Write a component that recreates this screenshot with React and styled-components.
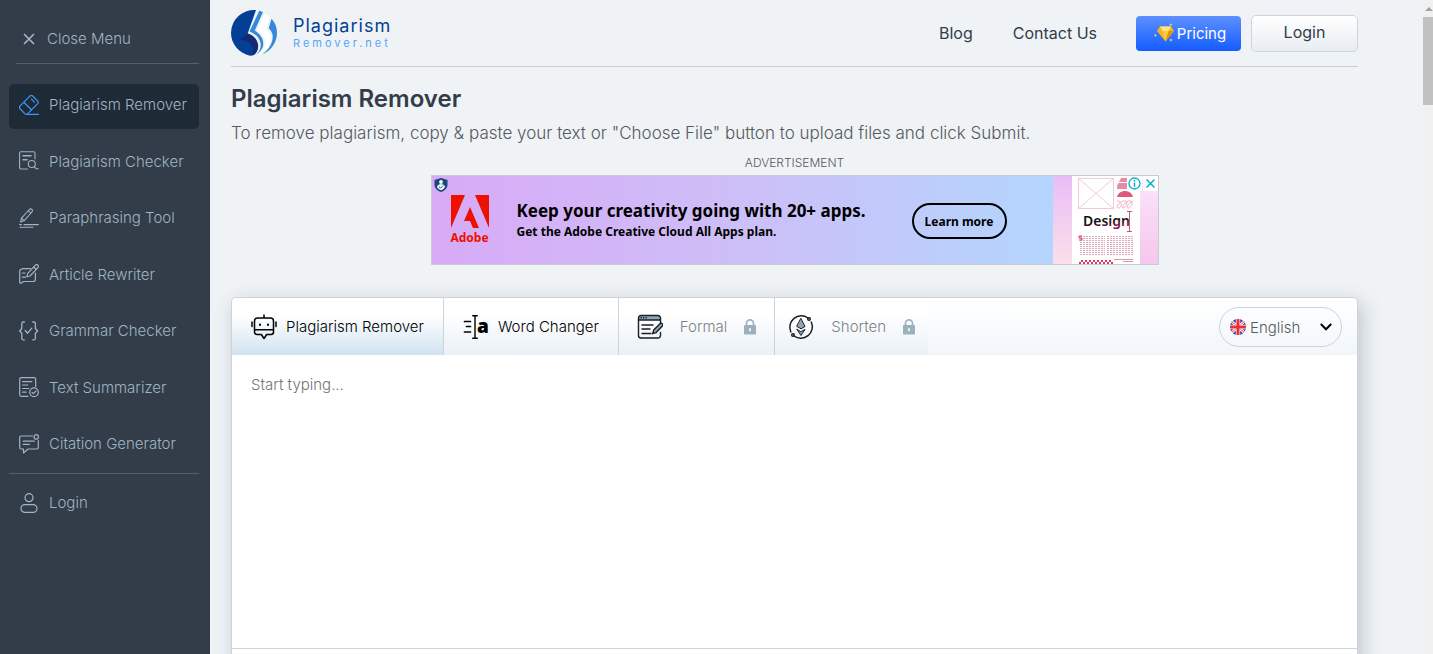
import React, { useState } from "react";
import styled, { createGlobalStyle, css } from "styled-components";

const GlobalStyle = createGlobalStyle`
  * {
    box-sizing: border-box;
  }

  body {
    margin: 0;
    background: #eff3f6;
    color: #323d49;
    font-family: "Inter", "Liberation Sans", sans-serif;
    font-size: 15px;
  }

  button, select, textarea {
    font-family: inherit;
  }
`;

const line = {
  fill: "none",
  stroke: "currentColor",
  strokeLinecap: "round",
  strokeLinejoin: "round",
};

/* Icons */
const CloseIcon = () => (
  <svg width="20" height="20" viewBox="0 0 20 20" {...line} strokeWidth="1.7">
    <path d="M5.5 5.5l9 9M14.5 5.5l-9 9" />
  </svg>
);

const EraserIcon = () => (
  <svg width="20" height="20" viewBox="0 0 20 20" {...line} stroke="#3f94f8" strokeWidth="1.2">
    <path d="M1.2 10.8 10.800 1.200a2.200 2.200 0 0 1 3.100 0l4.600 4.600a2.200 2.200 0 0 1 0 3.100L8.800 18.600a2.200 2.200 0 0 1-3 0l-4.600-4.600a2.200 2.200 0 0 1 0-3.200z" />
    <path d="M5 7.500l7.500 7.300M7.500 19.300h12M12.400 4.200l3 3" />
  </svg>
);

const CheckerIcon = () => (
  <svg width="20" height="20" viewBox="0 0 20 20" {...line} strokeWidth="1.1">
    <path d="M8.500 18H2a1.400 1.400 0 0 1-1.400-1.400V2.200A1.400 1.400 0 0 1 2 .8h12.600A1.400 1.400 0 0 1 16 2.200v5.600" />
    <path d="M4 4.700h8M4 8.800h4" strokeWidth="1.500" />
    <circle cx="12.800" cy="13" r="3.500" />
    <path d="M15.400 15.600l1.800 2.200h2" />
  </svg>
);

const PenLinesIcon = () => (
  <svg width="20" height="20" viewBox="0 0 20 20" {...line} strokeWidth="1.1">
    <path d="M1.600 14l.9-3.800L10.400 1.500a1.700 1.700 0 0 1 2.500 2.500L5.200 12.600z" />
    <path d="M9.300 2.700l2.500 2.400M2.500 10.200l2.700 2.400M.6 16.600h2M5 16.600h14.400M1 19.300h13" />
  </svg>
);

const RewriterIcon = () => (
  <svg width="20" height="20" viewBox="0 0 20 20" {...line} strokeWidth="1.200">
    <path d="M11.500 4.700H3.200L.7 6.200v12c0 1 1 1.300 1.800.7l2-1.400h9.700a2.200 2.200 0 0 0 2.200-2.200V9" />
    <path d="M8 12.600l.6-3L16.400 1.200a1.700 1.700 0 0 1 2.500 2.500L11 12zM3.200 9h3M3.200 13.200h3.500M14.700 3l2.500 2.500" />
  </svg>
);

const BracesIcon = () => (
  <svg width="20" height="20" viewBox="0 0 20 20" {...line} strokeWidth="1.300">
    <path d="M5.400 1H4.300A1.500 1.500 0 0 0 2.800 2.500v5L.7 10l2.100 2.300v5A1.500 1.500 0 0 0 4.300 18.800h1.100M13.800 1h1.100a1.500 1.500 0 0 1 1.500 1.500v5L18.600 10l-2.200 2.300v5a1.500 1.500 0 0 1-1.500 1.500h-1.100" />
    <path d="M6.200 9.500l2.400 2.700 4.200-5" />
  </svg>
);

const SummaryIcon = () => (
  <svg width="20" height="20" viewBox="0 0 20 20" {...line} strokeWidth="1.200">
    <path d="M9 19.300H2.200A1.500 1.500 0 0 1 .7 17.800V2A1.500 1.500 0 0 1 2.200.6h13A1.500 1.500 0 0 1 16.700 2v7.400" />
    <path d="M3.600 4.600h9.200M3.600 8h5.200M3.600 11.500h6.200M3.600 15.200h3.500" />
    <circle cx="15" cy="15.200" r="4.300" />
    <path d="M13 15.300l1.400 1.300 2.600-2.800" />
  </svg>
);

const CitationIcon = () => (
  <svg width="20" height="20" viewBox="0 0 20 20" {...line} strokeWidth="1.200">
    <path d="M13.600 2H2.200A1.500 1.500 0 0 0 .7 3.500v10A1.500 1.500 0 0 0 2.200 15h2.300v4l4.600-4h8.700a1.500 1.500 0 0 0 1.500-1.500V6.500" />
    <path d="M4.300 7.200h11M4.300 10.400h6" />
    <circle cx="17.200" cy="2.900" r="2.200" />
  </svg>
);

const UserIcon = () => (
  <svg width="20" height="20" viewBox="0 0 20 20" {...line} strokeWidth="1.200">
    <circle cx="10" cy="4.700" r="4" />
    <rect x="2" y="11.600" width="16" height="7.800" rx="3.900" />
  </svg>
);

const LogoMark = () => (
  <svg width="46" height="46" viewBox="0 0 46 46">
    <path fill="#053f95" d="M25 .1A23 23 0 0 0 0 23c0 11 8.500 20.500 19 22.700 5 .2 8-4.500 7.500-9L16.500 24z" />
    <path fill="#142a75" d="M8.500 29.500c4-1.500 5.500-4 8-6.200 5.500 1.500 10.500 6.700 10.700 12.200.2 5-2.200 8.700-6.200 10.100 3.500-7 0-15-12.500-16.100z" />
    <path fill="#3489d8" d="M28.300.8l3.700 1.200-8.200 18.500c5 3.500 8.700 7.500 8.500 13.500-.2 4.500-3 8-7.800 11.300 3.800-3.500 5.500-7 5.200-11.300-.5-5.500-5-10-11.200-12.500z" />
    <path fill="#fff" d="M33.500 3.400l4 2.600-5 13.500c5 5 6.500 10 4.500 15.500-1.500 4-4.500 7.500-8.500 9.700l-3 .6c5.500-3.700 8.300-7.300 8.600-11.800.2-5.500-3-10-7.600-13z" />
    <path fill="#fff" d="M37.500 6l1.500 1.300-3.600 11.200c4 4.500 5.100 9.500 3.600 14.500-1.300 4-4.500 8-9 11.300 4-3.500 6.500-7.500 7-11.800.5-4.500-1-9-4.500-13z" />
    <path fill="#3489d8" d="M40.500 8.800C44 12.500 46 17.300 46 23c0 10-6.700 18.300-14.500 21.300C37.500 39.500 42 33.500 41.700 26c-.2-3-1.500-5.300-4-7.700z" />
  </svg>
);

const DiamondIcon = () => (
  <svg width="20" height="20" viewBox="0 0 20 20">
    <path fill="#f6b81c" d="M6 3.500h11l3 4.500-8.500 10.500L3 8z" />
    <path fill="#ffe48b" d="M6 3.500h11L14.500 8h-6z" />
    <path fill="#fccb3d" d="M8.500 8h6l-3 10.500z" />
    <path fill="#dd9410" d="M14.500 8H20l-8.500 10.500z" />
    <path fill="#ffd95c" d="M16.800 0l.5 1.200 1.200.5-1.200.5-.5 1.200-.5-1.200-1.200-.5 1.200-.5zM1.300 10.500l.5 1.200 1 .5-1 .5-.5 1.200-.5-1.200-1-.5 1-.5zM17 15.300l.6 1.300 1.200.5-1.200.5-.6 1.300-.6-1.300-1.200-.5 1.200-.5z" />
  </svg>
);

const RobotIcon = () => (
  <svg width="26" height="26" viewBox="0 0 26 26" {...line} strokeWidth="1.500">
    <path d="M13 1v3M6.500 4h13a3 3 0 0 1 3 3v11a2.500 2.500 0 0 1-2.500 2.500h-4.300L13 24.500l-2.700-4H6A2.500 2.500 0 0 1 3.500 18V7a3 3 0 0 1 3-3zM3.500 15.700h19M1 8v4.500M25 8v4.500" />
    <path d="M9 10.500v.6M17 10.500v.6" strokeWidth="2" />
  </svg>
);

const WordIcon = () => (
  <svg width="26" height="26" viewBox="0 0 26 26" {...line}>
    <path d="M1.500 7.500h6M3.500 12.500h4M1.500 18h6" strokeWidth="1.700" />
    <path d="M12 2.200v21.600M9.700 1.800h4.600M9.700 24.200h4.600" strokeWidth="1.400" />
    <text x="14" y="18.500" fill="currentColor" stroke="none" fontFamily="Open Sans, sans-serif" fontWeight="800" fontSize="19">
      a
    </text>
  </svg>
);

const FormalIcon = () => (
  <svg width="26" height="26" viewBox="0 0 26 26" {...line} stroke="#1b1f23" strokeWidth="1.400">
    <path fill="#8ea6b6" d="M1.500 6V4A2.500 2.500 0 0 1 4 1.500h17A2.500 2.500 0 0 1 23.500 4v2z" />
    <path d="M1.500 6v15.500A2.500 2.500 0 0 0 4 24h17a2.500 2.500 0 0 0 2.500-2.500v-3M23.500 6v3.500M4 3.800h.3M6.500 3.800h.3M9 3.800h.3" />
    <path d="M5 11h11M5 15h8M5 19.500h9" />
    <path fill="#8ea6b6" d="M15.700 19.700l1-3.600 6.300-6.400a1.700 1.700 0 0 1 2.400 2.400l-6.300 6.500z" />
  </svg>
);

const ShortenIcon = () => (
  <svg width="26" height="26" viewBox="0 0 26 26" {...line} stroke="#1b1f23" strokeWidth="1.500">
    <path d="M20 4A11.500 11.500 0 0 0 2.800 18M6 22A11.500 11.500 0 0 0 23.300 8" />
    <circle cx="21" cy="5" r="1.300" />
    <circle cx="5" cy="21" r="1.300" />
    <path fill="#8ea6b6" strokeWidth="1" d="M13 4.700l4 7.800-4 2.300-4-2.300zM9 15.500l4 6 4-6-4 2z" />
  </svg>
);

const LockIcon = () => (
  <svg width="12" height="16" viewBox="0 0 12 16">
    <path fill="none" stroke="#9fb4c1" strokeWidth="1.700" d="M2.500 7V4.300a3.500 3.500 0 0 1 7 0V7" />
    <rect y="6" width="12" height="9.500" rx="1" fill="#9bb1be" />
    <path fill="#fff" d="M5.200 9.300h1.600v3H5.200z" />
  </svg>
);

const FlagIcon = () => (
  <svg width="16" height="16" viewBox="0 0 16 16">
    <clipPath id="flag-round">
      <circle cx="8" cy="8" r="8" />
    </clipPath>
    <g clipPath="url(#flag-round)">
      <path fill="#2e429b" d="M0 0h16v16H0z" />
      <path stroke="#fff" strokeWidth="2.800" d="M0 1l16 14M16 1L0 15" />
      <path stroke="#ee3a43" strokeWidth="1" d="M0 1l16 14M16 1L0 15" />
      <path stroke="#fff" strokeWidth="4.400" d="M8 0v16M0 8h16" />
      <path stroke="#f02c35" strokeWidth="3" d="M8 0v16M0 8h16" />
    </g>
  </svg>
);

const ChevronIcon = () => (
  <svg width="12" height="8" viewBox="0 0 12 8" fill="none" stroke="#000" strokeWidth="2">
    <path d="M.8 1L6 6.300 11.200 1" />
  </svg>
);

const ShieldIcon = () => (
  <svg width="14" height="14" viewBox="0 0 14 14">
    <path fill="#17497b" d="M7 0l6.500 2v4.500c0 3.500-2.500 6-6.500 7.500C3 12.500.5 10 .5 6.500V2z" />
    <circle cx="7" cy="4" r="1.900" fill="#fff" />
    <path fill="#fff" d="M3 8.500c.8-1.800 2-2.300 4-2.300s3.200.5 4 2.300c-.5 1.700-1.800 2.900-4 3.700-2.200-.8-3.500-2-4-3.700z" />
    <path fill="none" stroke="#17497b" d="M5 8.800l1.500 1.400L9.200 7.500" />
  </svg>
);

const AdobeIcon = () => (
  <svg width="38" height="33" viewBox="0 0 38 33">
    <path fill="#ee1100" d="M0 0h14L0 33zM24 0h14v33zM19 12l9 21h-6l-3-7h-6z" />
  </svg>
);

const DesignArt = () => (
  <svg width="105" height="88" viewBox="0 0 105 88">
    <defs>
      <linearGradient id="art-side" x2="0" y2="1">
        <stop offset="0" stopColor="#e8bdf7" />
        <stop offset="1" stopColor="#fbdfe9" />
      </linearGradient>
      <linearGradient id="art-side-right" x2="0" y2="1">
        <stop offset="0" stopColor="#fbe6fb" />
        <stop offset="1" stopColor="#f6c6ec" />
      </linearGradient>
      <linearGradient id="art-word" x2="0.3" y2="1">
        <stop offset="0.6" stopColor="#111" />
        <stop offset="1" stopColor="#8d1457" />
      </linearGradient>
      <pattern id="art-copy" width="3" height="2" patternUnits="userSpaceOnUse">
        <path fill="#dcaabb" d="M0 0h2v1H0z" />
      </pattern>
      <pattern id="art-zigzag" width="4" height="4" patternUnits="userSpaceOnUse">
        <path fill="#e0355c" d="M0 0h2v2H0zM2 2h2v2H2z" />
      </pattern>
    </defs>
    <path fill="url(#art-side)" d="M0 0h19v88H0z" />
    <path fill="url(#art-side-right)" d="M87 0h18v88H87z" />
    <path fill="#fff" d="M19 0h68v88H19z" />
    <path fill="none" stroke="#f3cbd6" d="M25.500 2.500h35v30h-35zM25 2l36 31M61 2L25 33" />
    <path fill="#e98aa5" d="M68 2h6v4h-8zM65.500 7h9v6H64c0-3 .5-5 1.500-6z" />
    <path fill="#e0577e" d="M64 21c2-8 14-8 16 0z" />
    <path fill="none" stroke="#eeabbe" d="M64 25c7 0 4 8 1 7s3-8 7-7 0 8-2 7 5-9 8-7-1 8-3 7 2-6 5-7" />
    <text x="30" y="50" fill="url(#art-word)" fontFamily="Noto Sans, sans-serif" fontWeight="600" fontSize="14">
      Design
    </text>
    <path fill="none" stroke="#c7547d" d="M76.500 36v19M74 35.500h5M74 55.500h5" />
    <path fill="url(#art-copy)" d="M26 59h26v20H26zM54 59h26v20H54z" />
    <path fill="none" stroke="#dd3763" d="M29 60h-3v2h3v2h-3" />
    <path fill="url(#art-zigzag)" d="M26 84h34v4H26z" />
    <path stroke="#d897ae" d="M61 83.500h19M70 85.500h10" />
  </svg>
);

const AdInfoIcon = () => (
  <svg width="15" height="15" viewBox="0 0 15 15" fill="none" stroke="#00aecd">
    <circle cx="7.500" cy="7.500" r="5.500" strokeWidth="1.300" />
    <path d="M7.500 6.500v4.300M7.500 4v1.400" strokeWidth="1.500" />
  </svg>
);

const AdCloseIcon = () => (
  <svg width="15" height="15" viewBox="0 0 15 15" fill="none" stroke="#00aecd" strokeWidth="1.500">
    <path d="M3.500 3.500l8 8M11.500 3.500l-8 8" />
  </svg>
);

const menu = [
  { label: "Plagiarism Remover", icon: <EraserIcon /> },
  { label: "Plagiarism Checker", icon: <CheckerIcon /> },
  { label: "Paraphrasing Tool", icon: <PenLinesIcon /> },
  { label: "Article Rewriter", icon: <RewriterIcon /> },
  { label: "Grammar Checker", icon: <BracesIcon /> },
  { label: "Text Summarizer", icon: <SummaryIcon /> },
  { label: "Citation Generator", icon: <CitationIcon /> },
];

const modes = [
  { label: "Plagiarism Remover", icon: <RobotIcon /> },
  { label: "Word Changer", icon: <WordIcon /> },
  { label: "Formal", icon: <FormalIcon />, locked: true },
  { label: "Shorten", icon: <ShortenIcon />, locked: true },
];

const App = () => {
  const [mode, setMode] = useState("Plagiarism Remover");
  const [text, setText] = useState("");
  const [language, setLanguage] = useState("English");

  return (
    <>
      <GlobalStyle />
      <Page>
        <Sidebar>
          <CloseButton type="button">
            <CloseIcon />
            Close Menu
          </CloseButton>
          <Menu>
            {menu.map((item, i) => (
              <MenuLink href="#" key={item.label} $active={i === 0}>
                {item.icon}
                {item.label}
              </MenuLink>
            ))}
          </Menu>
          <Account>
            <MenuLink href="#">
              <UserIcon />
              Login
            </MenuLink>
          </Account>
        </Sidebar>

        <Main>
          <Header>
            <Logo href="#">
              <LogoMark />
              <LogoText>
                <LogoName>Plagiarism</LogoName>
                <LogoDomain>Remover.net</LogoDomain>
              </LogoText>
            </Logo>
            <TopNav>
              <NavLink href="#">Blog</NavLink>
              <NavLink href="#">Contact Us</NavLink>
            </TopNav>
            <Actions>
              <PricingLink href="#">
                <DiamondIcon />
                Pricing
              </PricingLink>
              <LoginLink href="#">Login</LoginLink>
            </Actions>
          </Header>

          <Title>Plagiarism Remover</Title>
          <Intro>
            To remove plagiarism, copy &amp; paste your text or "Choose File" button to upload
            files and click Submit.
          </Intro>

          <AdLabel>ADVERTISEMENT</AdLabel>
          <Ad>
            <AdBody>
              <AdShield>
                <ShieldIcon />
              </AdShield>
              <AdBrand>
                <AdobeIcon />
                Adobe
              </AdBrand>
              <AdCopy>
                <AdHeadline>Keep your creativity going with 20+ apps.</AdHeadline>
                <AdText>Get the Adobe Creative Cloud All Apps plan.</AdText>
              </AdCopy>
              <AdButton type="button">Learn more</AdButton>
            </AdBody>
            <DesignArt />
            <AdControls>
              <AdControl type="button" aria-label="About this ad">
                <AdInfoIcon />
              </AdControl>
              <AdControl type="button" aria-label="Close ad">
                <AdCloseIcon />
              </AdControl>
            </AdControls>
          </Ad>

          <Editor>
            <Toolbar>
              {modes.map((item) => (
                <Tab
                  type="button"
                  key={item.label}
                  $active={item.label === mode}
                  $locked={item.locked}
                  onClick={() => !item.locked && setMode(item.label)}
                >
                  {item.icon}
                  {item.label}
                  {item.locked && <LockIcon />}
                </Tab>
              ))}
              <Language>
                <FlagIcon />
                <LanguageSelect
                  aria-label="Language"
                  value={language}
                  onChange={(e) => setLanguage(e.target.value)}
                >
                  <option>English</option>
                </LanguageSelect>
                <ChevronIcon />
              </Language>
            </Toolbar>
            <TextArea
              aria-label="Your text"
              placeholder="Start typing..."
              value={text}
              onChange={(e) => setText(e.target.value)}
            />
            <EditorFooter />
          </Editor>
        </Main>

        <ScrollTrack aria-hidden="true">
          <ScrollArrow />
          <ScrollThumb />
        </ScrollTrack>
      </Page>
    </>
  );
};

export default App;

const Page = styled.div`
  display: flex;
  height: 100vh;
  overflow: hidden;
`;

// Sidebar
const Sidebar = styled.aside`
  flex: 0 0 210px;
  padding: 14px 11px 0 9px;
  background: #323d49;
`;

const CloseButton = styled.button`
  display: flex;
  align-items: center;
  gap: 8px;
  width: calc(100% - 7px);
  height: 50px;
  margin: 0 0 20px 7px;
  padding: 0 3px;
  border: none;
  border-bottom: 1px solid #52606c;
  background: none;
  color: #a0b4c2;
  font-size: 15px;
  font-weight: 300;
  cursor: pointer;
`;

const Menu = styled.nav`
  display: flex;
  flex-direction: column;
  justify-content: space-between;
  height: 384px;
`;

const MenuLink = styled.a`
  display: flex;
  align-items: center;
  gap: 10px;
  height: 45px;
  padding: 0 10px 4px;
  border-radius: 5px;
  color: #a0b4c2;
  font-size: 15px;
  font-weight: 300;
  white-space: nowrap;
  text-decoration: none;
  background: ${({ $active }) => ($active ? "#1f2a37" : "none")};

  svg {
    flex: none;
  }
`;

const Account = styled.div`
  margin-top: 5px;
  padding-top: 8px;
  border-top: 1px solid #52606c;
`;

// Main column
const Main = styled.main`
  flex: 1;
  min-width: 0;
  padding: 0 64px 0 21px;
`;

const Header = styled.header`
  display: flex;
  align-items: center;
  height: 67px;
  border-bottom: 1px solid #c9cbcd;
`;

const Logo = styled.a`
  display: flex;
  align-items: center;
  gap: 16px;
  text-decoration: none;
`;

const LogoText = styled.span`
  display: flex;
  flex-direction: column;
`;

const LogoName = styled.span`
  color: #053f95;
  font-size: 18px;
  font-weight: 400;
  letter-spacing: 1px;
  line-height: 20px;
`;

const LogoDomain = styled.span`
  color: #57a5fb;
  font-size: 11px;
  font-weight: 400;
  letter-spacing: 3px;
  line-height: 14px;
`;

const TopNav = styled.nav`
  display: flex;
  gap: 40px;
  margin-left: auto;
`;

const NavLink = styled.a`
  color: #323d49;
  font-size: 16px;
  font-weight: 400;
  text-decoration: none;
`;

const Actions = styled.div`
  display: flex;
  align-items: center;
  gap: 10px;
  margin-left: 39px;
`;

const PricingLink = styled.a`
  display: flex;
  align-items: center;
  justify-content: center;
  gap: 3px;
  width: 105px;
  height: 35px;
  padding-left: 3px;
  border-radius: 4px;
  background: linear-gradient(#5e90ff, #145cff);
  color: #fff;
  font-size: 15px;
  text-decoration: none;
`;

const LoginLink = styled.a`
  width: 107px;
  height: 37px;
  border: 1px solid #ccd5de;
  border-radius: 5px;
  background: linear-gradient(#fff, #e8edf2);
  color: #323d49;
  font-size: 16px;
  line-height: 32px;
  text-align: center;
  text-decoration: none;
`;

const Title = styled.h1`
  margin: 16px 0 0;
  font-size: 24px;
  font-weight: 600;
  line-height: 32px;
`;

const Intro = styled.p`
  margin: 4px 0 0;
  color: #55595e;
  font-size: 17px;
  font-weight: 300;
  line-height: 28px;
`;

// Advert
const AdLabel = styled.p`
  margin: 8px 0 4px;
  color: #55595e;
  font-size: 12px;
  font-weight: 300;
  line-height: 16px;
  text-align: center;
`;

const Ad = styled.section`
  position: relative;
  display: flex;
  width: 728px;
  height: 90px;
  margin: 0 auto 32px;
  border: 1px solid #c9cbd3;
  color: #000;
  font-family: "Noto Sans", "Liberation Sans", sans-serif;
`;

const AdBody = styled.div`
  display: flex;
  flex: 1;
  align-items: center;
  padding: 2px 46px 0 19px;
  background: linear-gradient(90deg, #d8aaf7, #cdbff7 50%, #b3d5fe);
`;

const AdShield = styled.span`
  position: absolute;
  top: 2px;
  left: 2px;
  line-height: 0;
`;

const AdBrand = styled.div`
  display: flex;
  flex-direction: column;
  align-items: center;
  width: 38px;
  color: #ee1100;
  font-size: 12px;
  font-weight: 700;
  line-height: 20px;
`;

const AdCopy = styled.div`
  margin-left: 28px;
  white-space: nowrap;
`;

const AdHeadline = styled.p`
  margin: 0;
  font-size: 17px;
  font-weight: 700;
  line-height: 22px;
`;

const AdText = styled.p`
  margin: 0;
  font-size: 12px;
  font-weight: 700;
  line-height: 20px;
`;

const AdButton = styled.button`
  width: 95px;
  height: 36px;
  margin-left: auto;
  padding: 0;
  border: 2px solid #000;
  border-radius: 18px;
  background: none;
  color: #000;
  font-size: 12px;
  font-weight: 700;
  white-space: nowrap;
`;

const AdControls = styled.div`
  position: absolute;
  top: 0;
  right: 0;
  display: flex;
  gap: 1px;
`;

const AdControl = styled.button`
  width: 15px;
  height: 15px;
  padding: 0;
  border: none;
  background: #fff;
  line-height: 0;
`;

// Editor
const Editor = styled.section`
  display: flex;
  flex-direction: column;
  border: 1px solid #ccd3df;
  border-radius: 5px;
  background: #fff;
  box-shadow: 4px 6px 20px rgba(50, 61, 73, 0.25);
`;

const Toolbar = styled.div`
  display: flex;
  height: 57px;
  border-radius: 5px 5px 0 0;
  background: linear-gradient(#fff, #f2f6fa);
`;

const Tab = styled.button`
  display: flex;
  align-items: center;
  gap: 9px;
  padding: 0 19px;
  border: none;
  border-right: 1px solid #c8d4de;
  background: linear-gradient(#fff 30%, #e9f0f5);
  color: #000;
  font-size: 15px;
  font-weight: 300;
  white-space: nowrap;
  cursor: pointer;

  ${({ $active }) =>
    $active &&
    css`
      border-radius: 5px 0 0 0;
      background: linear-gradient(#fff 30%, #d0e3f0);
    `}

  ${({ $locked }) =>
    $locked &&
    css`
      gap: 17px;
      padding: 0 18px;
      color: #7d8286;
    `}

  &:nth-of-type(4) {
    padding: 0 13px;
    border-right: none;
  }
`;

const Language = styled.div`
  display: flex;
  align-items: center;
  gap: 4px;
  width: 123px;
  height: 40px;
  margin: 9px 15px 0 auto;
  padding: 0 9px 0 10px;
  border: 1px solid #ccd3df;
  border-radius: 20px;
`;

const LanguageSelect = styled.select`
  flex: 1;
  min-width: 0;
  padding: 0;
  border: none;
  outline: none;
  appearance: none;
  background: none;
  color: #55595e;
  font-size: 15px;
  font-weight: 300;
`;

const TextArea = styled.textarea`
  display: block;
  width: 100%;
  height: 293px;
  padding: 19px;
  border: none;
  outline: none;
  resize: none;
  font-size: 15px;
  font-weight: 300;
  line-height: 22px;

  &::placeholder {
    color: #757575;
  }
`;

const EditorFooter = styled.div`
  height: 60px;
  border-top: 1px solid #ccd3df;
`;

// Scroll bar
const ScrollTrack = styled.div`
  display: flex;
  flex: 0 0 11px;
  flex-direction: column;
  align-items: flex-end;
  background: #f1f1f1;
`;

const ScrollArrow = styled.span`
  height: 17px;
  padding-top: 7px;

  &::before {
    content: "";
    display: block;
    border: 4px solid transparent;
    border-top: none;
    border-bottom-color: #a3a3a3;
  }
`;

const ScrollThumb = styled.span`
  width: 10px;
  height: 88px;
  background: #c1c1c1;
`;
